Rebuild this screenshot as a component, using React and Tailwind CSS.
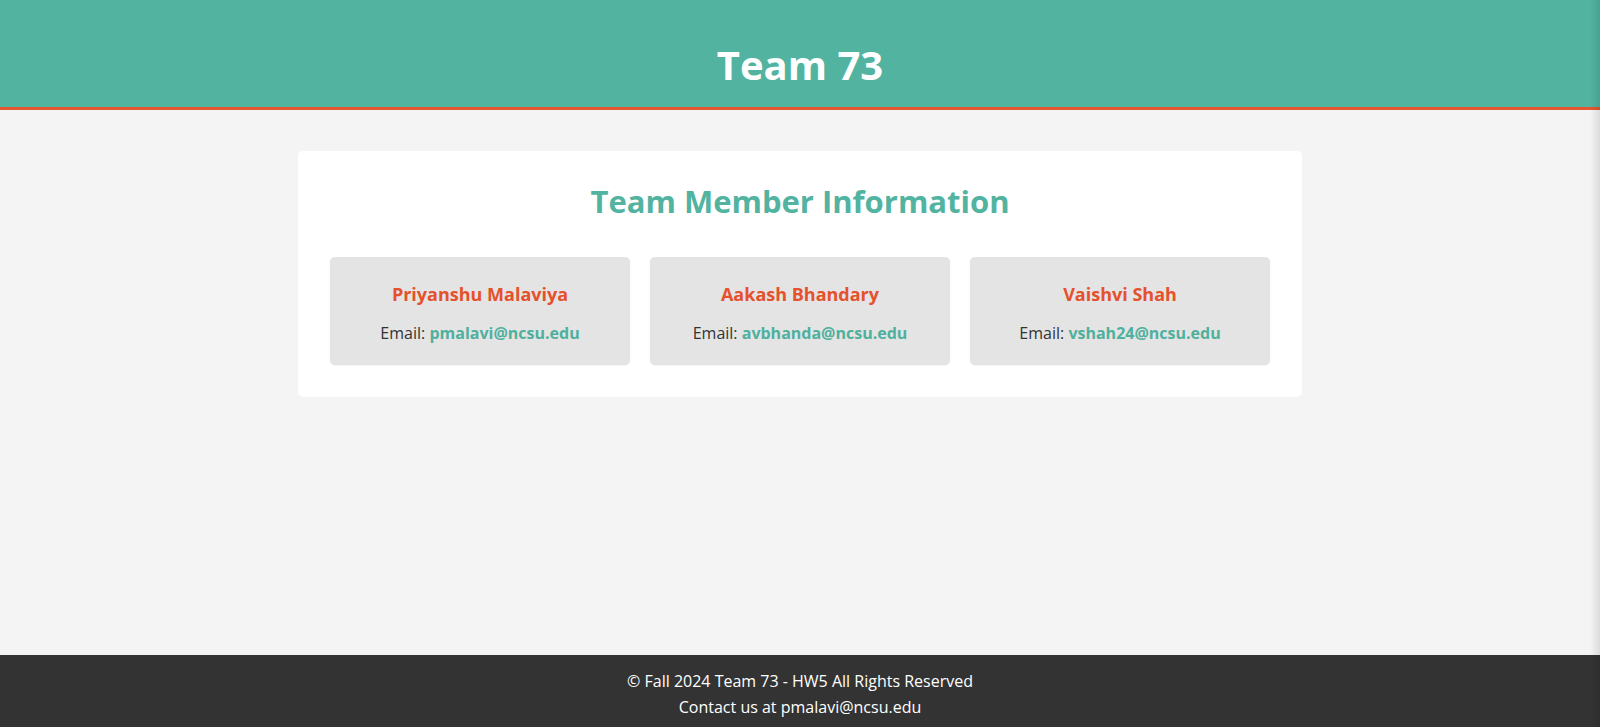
const members = [
  { name: "Priyanshu Malaviya", email: "pmalavi@ncsu.edu" },
  { name: "Aakash Bhandary", email: "avbhanda@ncsu.edu" },
  { name: "Vaishvi Shah", email: "vshah24@ncsu.edu" },
];

function MemberCard({ name, email }) {
  return (
    <div className="bg-[#e4e4e4] rounded-[5px] pt-[26px] pb-[20px] px-4 text-center shadow-[0_1px_2px_rgba(0,0,0,0.05)]">
      <h3 className="text-[18px] leading-[22px] font-bold text-[#e4512b]">{name}</h3>
      <p className="mt-[16px] text-[16px] leading-[24px] text-[#333]">
        Email: <a href={`mailto:${email}`} className="font-bold text-[#4fb09e]">{email}</a>
      </p>
    </div>
  );
}

export default function App() {
  return (
    <div className="relative min-h-[727px] flex flex-col bg-[#f4f4f4] font-['Open_Sans',sans-serif]">
      <header className="bg-[#52b3a1] border-b-[3px] border-[#e4572e] pt-[41px] pb-[18px] text-center">
        <h1 className="text-[40px] leading-[48px] font-bold text-white">Team 73</h1>
      </header>

      <main className="flex-1 pt-[41px]">
        <section className="w-[1004px] mx-auto bg-white rounded-[5px] p-8">
          <h2 className="text-[31px] leading-[36px] font-bold text-[#52b3a1] text-center mb-[38px]">
            Team Member Information
          </h2>
          <div className="grid grid-cols-3 gap-5">
            {members.map((m) => (
              <MemberCard key={m.email} {...m} />
            ))}
          </div>
        </section>
      </main>

      <footer className="bg-[#333] h-[72px] pt-[13px] flex flex-col items-center text-white text-[16px] leading-[26px]">
        <p>© Fall 2024 Team 73 - HW5 All Rights Reserved</p>
        <p>Contact us at pmalavi@ncsu.edu</p>
      </footer>

      {/* edge shade from the window */}
      <div className="absolute top-0 right-0 h-full w-[10px] bg-gradient-to-r from-transparent to-black/10 pointer-events-none" />
    </div>
  );
}
